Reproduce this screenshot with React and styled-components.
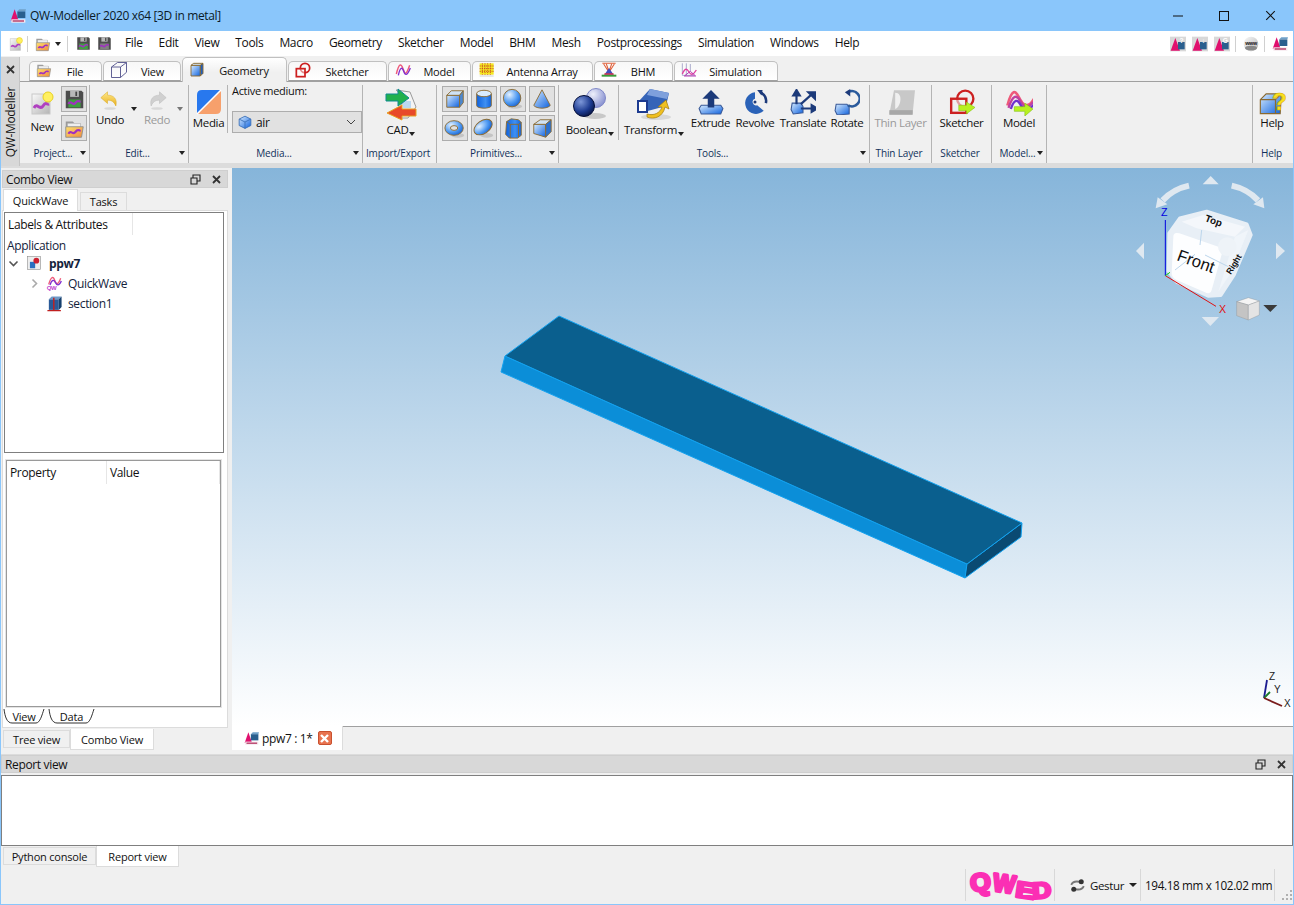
import React from "react";
import styled, { createGlobalStyle } from "styled-components";

const GlobalStyle = createGlobalStyle`
  html, body {
    margin: 0;
    padding: 0;
    background: #f0f0f0;
  }
  * {
    box-sizing: border-box;
  }
  body {
    font-family: "Open Sans", "Noto Sans", "Liberation Sans", sans-serif;
    font-size: 12px;
    color: #111;
  }
`;

const Window = styled("div")`
  width: 1294px;
  height: 905px;
  display: flex;
  flex-direction: column;
  border: 1px solid #8ac6fb;
  border-top: 0;
  background: #f0f0f0;
  overflow: hidden;
  letter-spacing: -0.35px;
`;

const TitleBar = styled("div")`
  height: 31px;
  margin: 0 -1px;
  flex: none;
  display: flex;
  align-items: center;
  background: #8ac6fb;
  padding: 0 1px 0 10px;
  font-size: 12px;
  color: #0a1a28;

  span {
    margin-left: 4px;
    flex: 1;
  }
`;

const WinButton = styled("div")`
  width: 46px;
  height: 31px;
  display: flex;
  align-items: center;
  justify-content: center;
`;

const MenuBar = styled("div")`
  height: 25px;
  flex: none;
  display: flex;
  align-items: center;
  background: #fff;
  padding-left: 8px;
`;

const MenuItem = styled("div")`
  padding: 0 8px 2px;
  white-space: nowrap;
`;

const BarSep = styled("div")`
  width: 1px;
  height: 16px;
  background: #d0d0d0;
  margin: ${(p) => p.$m || "0 7px"};
`;

const BarGap = styled("div")`
  width: ${(p) => p.$w}px;
  flex: none;
`;

const MenuSpacer = styled("div")`
  flex: 1;
`;

const RibbonArea = styled("div")`
  height: 112px;
  flex: none;
  display: flex;
  background: #f0f0f0;
  border-bottom: 5px solid #dcdcdc;
`;

const SideStrip = styled("div")`
  width: 19px;
  margin-top: 1px;
  margin-bottom: -3px;
  flex: none;
  background: #d8d8d8;
  border-right: 1px solid #c4c4c4;
  display: flex;
  flex-direction: column;
  align-items: center;
  padding-top: 8px;
  gap: 13px;
`;

const SideText = styled("div")`
  writing-mode: vertical-rl;
  transform: rotate(180deg);
  white-space: nowrap;
  font-size: 12px;
`;

const RibbonMain = styled("div")`
  flex: 1;
  display: flex;
  flex-direction: column;
  min-width: 0;
`;

const TabRow = styled("div")`
  height: 26px;
  flex: none;
  display: flex;
  align-items: flex-end;
  padding-left: 9px;
  border-bottom: 1px solid #a0a0a0;
`;

const RibbonTab = styled("div")`
  width: ${(p) => p.$w}px;
  height: ${(p) => (p.$active ? 25 : 20)}px;
  margin-right: 1px;
  margin-bottom: ${(p) => (p.$active ? -1 : 0)}px;
  display: flex;
  align-items: center;
  padding: 0 0 0 6px;
  background: ${(p) =>
    p.$active
      ? "linear-gradient(#fff, #f0f0f0 60%)"
      : "linear-gradient(#f7f7f7, #fff)"};
  border: 1px solid #c0c0c0;
  border-bottom: ${(p) => (p.$active ? "0" : "1px solid #a0a0a0")};
  border-radius: 5px 5px 0 0;
  font-size: 11px;
  letter-spacing: -0.2px;

  svg {
    flex: none;
    margin-top: ${(p) => (p.$active ? 0 : -2)}px;
  }

  span {
    flex: 1;
    text-align: center;
    white-space: nowrap;
    padding-top: ${(p) => (p.$active ? 0 : 1)}px;
    padding-right: 3px;
  }
`;

const Ribbon = styled("div")`
  flex: 1;
  display: flex;
  min-height: 0;
`;

const Group = styled("div")`
  width: ${(p) => p.$w}px;
  flex: none;
  display: flex;
  flex-direction: column;
  margin-top: 3px;
  border-right: ${(p) => (p.$noSep ? "0" : "1px solid #b4b4b4")};
  border-left: ${(p) => (p.$left ? "1px solid #b4b4b4" : "0")};
`;

const GroupBody = styled("div")`
  height: 60px;
  flex: none;
  display: flex;
  align-items: flex-start;
  padding: ${(p) => p.$pad || "0"};
`;

const GroupLabel = styled("div")`
  display: grid;
  grid-template-columns: 1fr auto 1fr;
  align-items: center;
  height: 15px;
  font-size: 10px;
  letter-spacing: -0.15px;
  color: #10305a;
  white-space: nowrap;
  padding-right: 3px;

  span {
    grid-column: 2;
  }

  i {
    grid-column: 3;
    justify-self: end;
  }
`;

const Caret = styled("i")`
  display: block;
  width: 0;
  height: 0;
  border-left: ${(p) => p.$s || 3.5}px solid transparent;
  border-right: ${(p) => p.$s || 3.5}px solid transparent;
  border-top: ${(p) => (p.$s ? p.$s : 4)}px solid ${(p) => p.$c || "#222"};
`;

const CaretBox = styled("div")`
  width: ${(p) => p.$w || 8}px;
  flex: none;
  display: flex;
  justify-content: center;
  padding-top: ${(p) => p.$top || 0}px;
`;

const BigButton = styled("div")`
  width: ${(p) => p.$w}px;
  flex: none;
  display: flex;
  flex-direction: column;
  align-items: center;
  gap: ${(p) => p.$gap || 0}px;
  padding-top: ${(p) => p.$top || 0}px;
  font-size: 11.5px;
  line-height: 14px;
  white-space: nowrap;
  color: ${(p) => (p.$off ? "#9a9a9a" : "#111")};

  svg {
    flex: none;
  }
`;

const LabelCaret = styled("div")`
  display: flex;
  align-items: flex-end;
  gap: 1px;
  height: 14px;

  i {
    margin-bottom: 1px;
  }
`;

const Stack = styled("div")`
  display: flex;
  flex-direction: column;
  gap: 3px;
`;

const SquareBtn = styled("div")`
  width: 26px;
  height: 26px;
  background: #e1e1e1;
  border: 1px solid #adadad;
  display: flex;
  align-items: center;
  justify-content: center;
`;

const PrimGrid = styled("div")`
  display: grid;
  grid-template-columns: repeat(4, 26px);
  grid-auto-rows: 26px;
  gap: 3px;
`;

const VSep = styled("div")`
  width: 1px;
  height: ${(p) => p.$h}px;
  flex: none;
  margin-left: ${(p) => p.$ml || 0}px;
  background: #b4b4b4;
`;

const MediumColumn = styled("div")`
  display: flex;
  flex-direction: column;
  margin-left: 4px;
`;

const MediumLabel = styled("div")`
  height: 14px;
  line-height: 14px;
  margin-top: -1px;
  margin-bottom: 13px;
  font-size: 11px;
  letter-spacing: -0.3px;
`;

const Combo = styled("div")`
  width: 130px;
  height: 22px;
  display: flex;
  align-items: center;
  gap: 4px;
  padding: 0 5px;
  background: #e1e1e1;
  border: 1px solid #adadad;

  span {
    flex: 1;
  }
`;

const Spacer = styled("div")`
  flex: 1;
`;

const Main = styled("div")`
  flex: none;
  height: 582px;
  display: flex;
`;

const LeftPanel = styled("div")`
  width: 231px;
  flex: none;
  display: flex;
  flex-direction: column;
  padding: 2px 4px 0 1px;
`;

const DockTitle = styled("div")`
  height: 18px;
  flex: none;
  display: flex;
  align-items: center;
  justify-content: space-between;
  background: #d8d8d8;
  border: 1px solid #cfcfcf;
  padding: 0 6px 0 3px;

  div {
    display: flex;
    align-items: center;
    gap: 11px;
  }
`;

const TopTabs = styled("div")`
  height: 21px;
  flex: none;
  margin-top: 1px;
  display: flex;
  align-items: flex-end;
  padding-left: 1px;
`;

const TopTab = styled("div")`
  width: ${(p) => p.$w}px;
  height: ${(p) => (p.$active ? 22 : 18)}px;
  margin-bottom: ${(p) => (p.$active ? -1 : 0)}px;
  margin-right: ${(p) => (p.$active ? 2 : 0)}px;
  display: flex;
  align-items: center;
  justify-content: center;
  font-size: 11px;
  letter-spacing: -0.2px;
  background: ${(p) => (p.$active ? "#fff" : "#f0f0f0")};
  border: 1px solid #dcdcdc;
  border-bottom: 0;
  position: relative;
`;

const ComboPage = styled("div")`
  flex: 1;
  min-height: 0;
  display: flex;
  flex-direction: column;
  background: #fff;
  border: 1px solid #dcdcdc;
  padding: 1px 1px 0 1px;
`;

const TreeBox = styled("div")`
  height: 241px;
  flex: none;
  margin-right: 2px;
  border: 1px solid #7f7f7f;
  background: #fff;
`;

const TreeHeader = styled("div")`
  height: 22px;
  width: 128px;
  padding-left: 3px;
  display: flex;
  align-items: center;
  border-right: 1px solid #e6e6e6;
`;

const TreeRow = styled("div")`
  height: 20px;
  display: flex;
  align-items: center;
  padding-left: ${(p) => p.$indent || 2}px;
  margin-bottom: ${(p) => p.$mb || 0}px;
  font-weight: ${(p) => (p.$bold ? 700 : 400)};
  gap: ${(p) => p.$gap || 4}px;
  color: #14233c;
`;

const PropBox = styled("div")`
  height: 247px;
  flex: none;
  margin: 7px 5px 0 2px;
  border: 1px solid #9a9a9a;
  box-shadow: 0 0 0 1px #e4e4e4;
  background: #fff;
`;

const PropHeader = styled("div")`
  height: 23px;
  display: flex;
  align-items: center;

  div {
    height: 100%;
    display: flex;
    align-items: center;
    padding-left: 3px;
    border-right: 1px solid #e6e6e6;
  }

  div:first-child {
    width: 100px;
  }

  div:last-child {
    flex: 1;
  }
`;

const SheetTabs = styled("div")`
  display: flex;
  height: 18px;
  padding-top: 2px;
  margin-left: -1px;
  gap: 3px;
`;

const SheetTab = styled("div")`
  width: ${(p) => p.$w}px;
  height: 15px;
  position: relative;
  text-align: center;
  font-size: 11px;
  letter-spacing: -0.2px;
  line-height: 15px;

  svg {
    position: absolute;
    left: 0;
    top: 0;
  }
`;

const BottomTabs = styled("div")`
  height: 21px;
  flex: none;
  margin-top: ${(p) => (p.$flush ? 0 : 1)}px;
  display: flex;
  align-items: flex-start;
  padding-left: ${(p) => p.$pad || 1}px;
`;

const BottomTab = styled("div")`
  width: ${(p) => p.$w}px;
  height: ${(p) => (p.$active ? 21 : 18)}px;
  margin-top: ${(p) => (p.$active ? 0 : 1)}px;
  display: flex;
  align-items: center;
  justify-content: center;
  font-size: 11px;
  letter-spacing: -0.2px;
  background: ${(p) => (p.$active ? "#fff" : "#f0f0f0")};
  border: 1px solid #dcdcdc;
  border-top: ${(p) => (p.$active ? "0" : "1px solid #dcdcdc")};
`;

const RightPanel = styled("div")`
  flex: 1;
  min-width: 0;
  display: flex;
  flex-direction: column;
`;

const Viewport = styled("div")`
  height: 558px;
  flex: none;
  position: relative;
  background: linear-gradient(#86b5da, #ffffff);

  > svg:first-child {
    display: block;
  }
`;

const NavCubeBox = styled("div")`
  position: absolute;
  top: -3px;
  right: -1px;
  width: 174px;
  height: 170px;

  svg {
    display: block;
  }
`;

const MiniAxes = styled("div")`
  position: absolute;
  right: 0;
  bottom: 14px;
  width: 39px;
  height: 42px;

  svg {
    display: block;
  }
`;

const DocTabs = styled("div")`
  flex: 1;
  display: flex;
  border-top: 1px solid #a0a0a0;
  background: #f0f0f0;
`;

const DocTab = styled("div")`
  width: 111px;
  height: 24px;
  margin-top: -1px;
  display: flex;
  align-items: center;
  gap: 3px;
  padding-left: 12px;
  background: #fff;
  border-right: 1px solid #dcdcdc;
`;

const CloseBox = styled("div")`
  width: 14px;
  height: 14px;
  margin-left: 2px;
  background: #e8734f;
  border: 1px solid #c9502e;
  border-radius: 2px;
  display: flex;
  align-items: center;
  justify-content: center;
`;

const ReportArea = styled("div")`
  flex: none;
  margin-top: 4px;
  border-top: 1px solid #dcdcdc;
  display: flex;
  flex-direction: column;
`;

const ReportBox = styled("div")`
  height: 71px;
  margin-top: 2px;
  background: #fff;
  border: 1px solid #7f7f7f;
`;

const StatusBar = styled("div")`
  flex: 1;
  display: flex;
  justify-content: flex-end;
  align-items: flex-end;
  padding-bottom: 3px;
`;

const StatusCell = styled("div")`
  width: ${(p) => p.$w}px;
  height: 32px;
  flex: none;
  display: flex;
  align-items: center;
  gap: ${(p) => p.$gap || 0}px;
  padding: ${(p) => p.$pad || "0 4px"};
  border-left: 1px solid #d8d8d8;
  font-size: ${(p) => p.$size || 12}px;
  white-space: nowrap;
`;

const Grip = styled("div")`
  width: 19px;
  height: 32px;
  border-left: 1px solid #d8d8d8;
  display: flex;
  align-items: flex-end;
  justify-content: flex-end;
`;

function Defs() {
  return (
    <svg width="0" height="0" style={{ display: "block" }}>
      <defs>
        <linearGradient id="gBlue" x1="0" y1="0" x2="1" y2="1">
          <stop offset="0" stopColor="#d8ecff" />
          <stop offset="1" stopColor="#0f62de" />
        </linearGradient>
        <linearGradient id="gBlueH" x1="0" y1="0" x2="1" y2="0">
          <stop offset="0" stopColor="#0f62de" />
          <stop offset="0.6" stopColor="#3f90f2" />
          <stop offset="1" stopColor="#0f62de" />
        </linearGradient>
        <radialGradient id="gSphere" cx="0.35" cy="0.3" r="0.8">
          <stop offset="0" stopColor="#e4f2ff" />
          <stop offset="0.6" stopColor="#4c98f2" />
          <stop offset="1" stopColor="#1259c8" />
        </radialGradient>
        <radialGradient id="gDark" cx="0.35" cy="0.3" r="0.8">
          <stop offset="0" stopColor="#7d97d8" />
          <stop offset="0.6" stopColor="#1c3a90" />
          <stop offset="1" stopColor="#050f38" />
        </radialGradient>
        <radialGradient id="gPale" cx="0.35" cy="0.3" r="0.8">
          <stop offset="0" stopColor="#eef0fb" />
          <stop offset="1" stopColor="#7e88cc" />
        </radialGradient>
        <linearGradient id="gYellow" x1="0" y1="0" x2="0" y2="1">
          <stop offset="0" stopColor="#ffe98a" />
          <stop offset="1" stopColor="#e8b020" />
        </linearGradient>
        <linearGradient id="gFolder" x1="0" y1="0" x2="1" y2="1">
          <stop offset="0" stopColor="#ffe070" />
          <stop offset="1" stopColor="#f08a3c" />
        </linearGradient>
        <linearGradient id="gGrey" x1="0" y1="0" x2="1" y2="1">
          <stop offset="0" stopColor="#fafafa" />
          <stop offset="1" stopColor="#b4b4b4" />
        </linearGradient>
      </defs>
    </svg>
  );
}

const Ico = ({ w, h = w, vb = "0 0 24 24", children }) => (
  <svg width={w} height={h} viewBox={vb}>
    {children}
  </svg>
);

const AppLogo = ({ s = 16 }) => (
  <Ico w={s}>
    <polygon points="7,2 13,19 1,19" fill="#e0106e" />
    <rect x="11" y="5" width="12" height="10" fill="#2a5f8e" />
    <polygon points="11,5 14,2 24,2 23,5" fill="#6fa0c8" />
    <rect x="2" y="17" width="21" height="5" fill="#f6e8ee" />
    <rect x="4" y="18.5" width="17" height="2" fill="#b0305e" />
  </Ico>
);

const NewIcon = ({ s = 24 }) => (
  <Ico w={s}>
    <rect x="2" y="3" width="18" height="20" fill="url(#gGrey)" stroke="#c8c8c8" />
    <path d="M4 17 C7 11 10 20 13 15 S17 14 19 13" fill="none" stroke="#b040c0" strokeWidth="3" />
    <circle cx="18" cy="6" r="5" fill="#fff060" stroke="#e8d020" />
  </Ico>
);

const SaveIcon = ({ s = 22, accent = "#3fa040" }) => (
  <Ico w={s}>
    <path d="M2 2 H20 L22 4 V22 H2 Z" fill="#4c4c4c" />
    <rect x="7" y="2" width="10" height="7" fill="#b8b8b8" />
    <rect x="13" y="3" width="2" height="5" fill="#444" />
    <rect x="5" y="12" width="14" height="9" fill={accent} />
    <path d="M5 17 C8 12 10 20 13 16 S17 15 19 14" fill="none" stroke="#a030c0" strokeWidth="2.5" />
  </Ico>
);

const OpenIcon = ({ s = 22 }) => (
  <Ico w={s}>
    <path d="M2 4 H10 L12 6 H19 V10 H2 Z" fill="#9a9a9a" />
    <rect x="4" y="6" width="15" height="7" fill="#eee" stroke="#aaa" strokeWidth=".5" />
    <path d="M2 10 H22 L20 22 H2 Z" fill="url(#gFolder)" stroke="#8c8c8c" />
    <path d="M5 18 C8 13 10 20 13 16 S17 15 19 14" fill="none" stroke="#a030c0" strokeWidth="2.5" />
  </Ico>
);

const ArrowCurve = ({ fill, mirror, stroke }) => (
  <g transform={mirror ? "translate(24 0) scale(-1 1)" : undefined}>
    <path
      d="M1 8 L9 1 V5 C17 5 21 10 19 18 C17 13 14 11 9 11 V15 Z"
      fill={fill}
      stroke={stroke}
      strokeWidth=".6"
    />
    <ellipse cx="12" cy="21" rx="7" ry="1.6" fill="#d8d8d8" />
  </g>
);

const MediaIcon = () => (
  <Ico w={26} vb="0 0 26 26">
    <path d="M1 25 L25 1 V20 Q25 25 20 25 Z" fill="#f7a06c" />
    <path d="M1 25 L25 1 H6 Q1 1 1 6 Z" fill="#2878ee" />
    <path d="M1 25 L25 1" stroke="#fff" strokeWidth="1.6" />
  </Ico>
);

const TinyCube = () => (
  <Ico w={14}>
    <polygon points="12,2 22,7 22,18 12,23 2,18 2,7" fill="url(#gBlue)" stroke="#3a70b8" strokeWidth="1.5" />
    <path d="M2 7 L12 12 L22 7 M12 12 V23" fill="none" stroke="#3a70b8" strokeWidth="1.5" />
  </Ico>
);

const CadIcon = () => (
  <Ico w={34} vb="0 0 34 34">
    <path d="M12 3 L26 5 L32 20 L24 31 H14 L20 10 Z" fill="#f4f4f4" stroke="#9a9a9a" />
    <rect x="19" y="14" width="8" height="7" fill="#bcd8f0" />
    <polygon points="2,7 14,7 14,2 25,11 14,19 14,14 2,14" fill="#22b04c" stroke="#0f8a90" />
    <polygon points="32,22 18,22 18,18 3,26 18,33 18,29 32,29" fill="#e8492a" stroke="#e8a020" />
  </Ico>
);

const brown = "#8a6a32";

const PrimBox = () => (
  <Ico w={22}>
    <polygon points="3,8 17,8 17,21 3,21" fill="url(#gBlue)" stroke={brown} />
    <polygon points="3,8 8,3 21,3 17,8" fill="#cfe2f4" stroke={brown} />
    <polygon points="17,8 21,3 21,16 17,21" fill="#4c88d0" stroke={brown} />
  </Ico>
);
const PrimCylinder = () => (
  <Ico w={22}>
    <path d="M4 6 V19 C4 23 20 23 20 19 V6" fill="url(#gBlueH)" stroke={brown} />
    <ellipse cx="12" cy="6" rx="8" ry="3.5" fill="#d8ecff" stroke={brown} />
  </Ico>
);
const PrimSphere = () => (
  <Ico w={22}>
    <ellipse cx="14" cy="20" rx="8" ry="2.5" fill="#c4c4c4" />
    <circle cx="11" cy="11" r="9.5" fill="url(#gSphere)" stroke={brown} />
  </Ico>
);
const PrimCone = () => (
  <Ico w={22}>
    <path d="M12 2 L21 19 C18 23 6 23 3 19 Z" fill="url(#gBlue)" stroke={brown} />
  </Ico>
);
const PrimTorus = () => (
  <Ico w={22}>
    <ellipse cx="15" cy="20" rx="7" ry="2.5" fill="#c4c4c4" />
    <ellipse cx="11" cy="12" rx="10" ry="8" fill="url(#gSphere)" stroke={brown} />
    <ellipse cx="11" cy="12" rx="4" ry="2.6" fill="#e1e1e1" stroke={brown} />
  </Ico>
);
const PrimEllipsoid = () => (
  <Ico w={22}>
    <ellipse cx="15" cy="20" rx="7" ry="2.5" fill="#c4c4c4" />
    <ellipse cx="11" cy="11" rx="11" ry="7" transform="rotate(-35 11 11)" fill="url(#gSphere)" stroke={brown} />
  </Ico>
);
const PrimPrism = () => (
  <Ico w={22}>
    <polygon points="5,5 10,2 18,3 21,6 21,20 17,23 8,23 4,19" fill="url(#gBlueH)" stroke={brown} />
    <path d="M5 5 L9 8 H18 L21 6 M9 8 V23 M18 8 V22" fill="none" stroke={brown} />
  </Ico>
);
const PrimWedge = () => (
  <Ico w={22}>
    <polygon points="3,8 16,8 16,22 3,18" fill="url(#gBlue)" stroke={brown} />
    <polygon points="3,8 10,3 22,3 16,8" fill="#cfe2f4" stroke={brown} />
    <polygon points="16,8 22,3 22,16 16,22" fill="#2a70d0" stroke={brown} />
  </Ico>
);

const BooleanIcon = () => (
  <Ico w={34} vb="0 0 34 34">
    <ellipse cx="22" cy="29" rx="11" ry="3" fill="#c8c8c8" />
    <circle cx="23" cy="11" r="9.5" fill="url(#gPale)" stroke="#8088c8" />
    <circle cx="11" cy="19" r="10.5" fill="url(#gDark)" stroke="#050f38" />
  </Ico>
);

const TransformIcon = () => (
  <Ico w={36} vb="0 0 36 36">
    <ellipse cx="20" cy="31" rx="15" ry="3" fill="#d8d8d8" />
    <polygon points="3,15 14,3 33,7 30,20 8,26" fill="#3564b8" />
    <polygon points="14,3 33,7 31,13 11,9" fill="#7ea0dc" />
    <rect x="2" y="15" width="9" height="11" fill="#fff" stroke="#1c3a90" strokeWidth="2" />
    <path d="M11 28 C18 30 24 27 26 21 L22 21 L30 14 L33 23 L29 21 C27 31 18 34 11 31 Z" fill="#f0c020" stroke="#a07a10" strokeWidth=".7" />
  </Ico>
);

const ExtrudeIcon = () => (
  <Ico w={26}>
    <polygon points="3,15 21,15 23,18 21,23 3,23 1,18" fill="url(#gBlue)" stroke="#3a5a98" />
    <polygon points="12,1 20,9 15,9 15,17 9,17 9,9 4,9" fill="#1c3a7a" />
  </Ico>
);

const RevolveIcon = () => (
  <Ico w={26}>
    <path d="M12 3 A10 10 0 1 0 20 20 L14 15 A3 3 0 1 1 12 9 Z" fill="#2a62b8" />
    <circle cx="12" cy="12" r="1.4" fill="#1c3a7a" />
    <path d="M17 3 C21 5 23 9 22 13" fill="none" stroke="#1c3a7a" strokeWidth="2.4" />
    <polygon points="14,1 19,1 18,6" fill="#1c3a7a" />
  </Ico>
);

const TranslateIcon = () => (
  <Ico w={26}>
    <polygon points="2,13 10,13 12,16 12,22 3,23 1,19" fill="url(#gBlue)" stroke="#3a5a98" />
    <path d="M6 14 V5 M3 6 L6 1 L9 6 Z M10 14 L20 5 M17 3 H23 V9 Z M10 18 H21 M20 15 L25 18 L20 21 Z" fill="#1c3a7a" stroke="#1c3a7a" strokeWidth="2" />
  </Ico>
);

const RotateIcon = () => (
  <Ico w={26}>
    <polygon points="2,14 12,14 14,17 14,23 3,24 1,20" fill="url(#gBlue)" stroke="#3a5a98" />
    <path d="M13 3 A7 7 0 1 1 13 15" fill="none" stroke="#2a5a9c" strokeWidth="2.4" />
    <polygon points="15,0 15,7 10,3" fill="#1c3a7a" />
  </Ico>
);

const ThinLayerIcon = () => (
  <Ico w={28}>
    <polygon points="6,2 24,2 22,22 2,22" fill="#c8c8c8" />
    <path d="M7 4 C14 4 12 16 7 18 Z" fill="#f0f0f0" />
    <rect x="2" y="19" width="20" height="4" fill="#a8a8a8" />
  </Ico>
);

const SketcherIcon = () => (
  <Ico w={26}>
    <circle cx="15" cy="9" r="7.5" fill="none" stroke="#cc2020" strokeWidth="2.2" />
    <rect x="2" y="9" width="14" height="13" fill="#f0f0f0" fillOpacity=".6" stroke="#cc2020" strokeWidth="2.2" />
    <polygon points="9,15 16,15 16,12 24,17 16,23 16,20 9,20" fill="#b8f020" stroke="#80c010" strokeWidth=".5" />
  </Ico>
);

const ModelIcon = () => (
  <Ico w={28}>
    <path d="M2 15 C6 0 9 2 12 8 S19 19 25 9" fill="none" stroke="#ee5a7a" strokeWidth="2.2" />
    <path d="M3 17 C7 5 10 6 13 11 S19 19 24 12" fill="none" stroke="#c040a0" strokeWidth="2" />
    <path d="M5 18 C8 9 11 10 13 14 S19 21 25 14" fill="none" stroke="#7030d0" strokeWidth="2" />
    <polygon points="8,16 17,16 17,13 24,18 17,24 17,20 8,20" fill="#b8f020" stroke="#80c010" strokeWidth=".5" />
  </Ico>
);

const HelpIcon = () => (
  <Ico w={28}>
    <polygon points="2,10 7,5 20,5 19,22 2,22" fill="url(#gBlue)" stroke={brown} />
    <path d="M2 10 H15 V22 M15 10 L20 5" fill="none" stroke={brown} />
    <text x="12" y="19" fontSize="21" fontWeight="700" fontFamily="Liberation Sans, sans-serif" fill="#f8e020" stroke="#d8b000" strokeWidth=".5">?</text>
  </Ico>
);

const WireCube = () => (
  <Ico w={18}>
    <path d="M2 8 L10 2 H22 V15 L14 22 H2 Z M2 8 H14 V22 M14 8 L22 2" fill="none" stroke="#50508a" strokeWidth="1.2" />
  </Ico>
);

const TabGeoIcon = () => (
  <Ico w={16}>
    <polygon points="3,5 17,5 17,21 3,21" fill="url(#gBlue)" stroke={brown} strokeWidth="1.4" />
    <polygon points="3,5 7,2 21,2 17,5" fill="#cfe2f4" stroke={brown} strokeWidth="1.4" />
    <polygon points="17,5 21,2 21,17 17,21" fill="#1f5fc0" stroke={brown} strokeWidth="1.4" />
  </Ico>
);

const TabSketchIcon = () => (
  <Ico w={16}>
    <circle cx="15" cy="9" r="7" fill="none" stroke="#cc2020" strokeWidth="2.6" />
    <rect x="2" y="10" width="13" height="12" fill="#fff" fillOpacity=".5" stroke="#cc2020" strokeWidth="2.6" />
  </Ico>
);

const TabModelIcon = () => (
  <Ico w={16}>
    <path d="M2 18 C6 1 9 2 12 10 S16 22 22 5" fill="none" stroke="#ee5a7a" strokeWidth="2.2" />
    <path d="M5 20 C8 6 11 8 13 14 S18 22 23 9" fill="none" stroke="#8030d0" strokeWidth="2" />
  </Ico>
);

const TabAntennaIcon = () => (
  <Ico w={16}>
    <rect x="1" y="2" width="21" height="17" fill="#f4e820" />
    <path d="M1 6 H22 M1 10 H22 M1 14 H22 M5 2 V19 M9 2 V19 M13 2 V19 M17 2 V19" stroke="#c03020" strokeWidth="1.3" strokeDasharray="1.6 1.6" />
    <rect x="1" y="20" width="21" height="2" fill="#dcdcdc" />
  </Ico>
);

const TabBhmIcon = () => (
  <Ico w={16}>
    <path d="M2 2 H22 M4 3 L11 14 M20 3 L13 14 M8 3 L12 14 M16 3 L12 14" stroke="#e0603a" strokeWidth="1.6" />
    <polygon points="12,9 19,19 5,19" fill="#4050c0" />
    <rect x="1" y="19" width="22" height="3" fill="#3a9a3a" />
    <rect x="5" y="17" width="14" height="2" fill="#e03040" />
  </Ico>
);

const TabSimIcon = () => (
  <Ico w={16}>
    <path d="M2 2 V20 H20 M8 2 V20 M14 3 V14" fill="none" stroke="#9898c0" strokeWidth="1.2" />
    <path d="M2 18 C6 8 9 10 12 15 S18 20 23 12" fill="none" stroke="#e040a0" strokeWidth="2" />
    <path d="M5 21 L14 14 L22 21 Z" fill="none" stroke="#b030b0" strokeWidth="1.4" />
  </Ico>
);

const ToolHelp = ({ mark }) => (
  <Ico w={16}>
    <rect x="0" y="1" width="24" height="22" fill="#d8d8d8" />
    <polygon points="8,3 15,22 1,22" fill="#e0106e" />
    <rect x="12" y="9" width="10" height="11" fill="#2a5f8e" />
    <text x="17" y="10" fontSize="10" fontWeight="700" textAnchor="middle" fill="#fff" fontFamily="Liberation Sans, sans-serif">{mark}</text>
  </Ico>
);

const WwwIcon = () => (
  <Ico w={16}>
    <circle cx="12" cy="12" r="11" fill="url(#gGrey)" />
    <ellipse cx="12" cy="18" rx="9" ry="3.5" fill="#888" />
    <text x="12" y="13" fontSize="8" fontWeight="700" textAnchor="middle" fill="#111" fontFamily="Liberation Sans, sans-serif" letterSpacing="-.5">www</text>
  </Ico>
);

const Chevron = ({ open }) => (
  <Ico w={11} vb="0 0 11 11">
    <path
      d={open ? "M1.5 3.5 L5.5 7.5 L9.5 3.5" : "M3.5 1.5 L7.5 5.5 L3.5 9.5"}
      fill="none"
      stroke={open ? "#555" : "#aaa"}
      strokeWidth="1.6"
    />
  </Ico>
);

const DocIcon = () => (
  <Ico w={14}>
    <rect x="1" y="1" width="22" height="22" fill="#eee" stroke="#8a8a8a" />
    <polygon points="5,10 14,10 14,21 5,21" fill="#2a6fc0" />
    <circle cx="16" cy="8" r="5" fill="#cc2030" />
  </Ico>
);

const QwTreeIcon = () => (
  <Ico w={16}>
    <path d="M4 14 C8 1 11 2 13 8 S18 16 22 5" fill="none" stroke="#ee5a7a" strokeWidth="2" />
    <path d="M6 15 C9 6 12 7 14 11 S19 18 23 9" fill="none" stroke="#8030d0" strokeWidth="2" />
    <text x="1" y="23" fontSize="9" fontWeight="700" fill="#c040d0" fontFamily="Liberation Sans, sans-serif">QW</text>
  </Ico>
);

const SectionIcon = () => (
  <Ico w={17}>
    <polygon points="4,6 18,6 18,21 4,21" fill="#2a5a98" />
    <polygon points="4,6 8,2 22,2 18,6" fill="#6e9ac8" />
    <polygon points="18,6 22,2 22,17 18,21" fill="#16406e" />
    <path d="M11 4 V22 M2 22 H21" stroke="#c02020" strokeWidth="2" />
  </Ico>
);

const RestoreGlyph = () => (
  <Ico w={11} vb="0 0 11 11">
    <path d="M1 4 H7 V10 H1 Z M3 4 V1 H10 V7 H7" fill="none" stroke="#222" strokeWidth="1.1" />
  </Ico>
);

const CloseGlyph = ({ c = "#333", s = 9, sw = 1.8 }) => (
  <Ico w={s} vb="0 0 9 9">
    <path d="M1 1 L8 8 M8 1 L1 8" stroke={c} strokeWidth={sw} />
  </Ico>
);

const SheetShape = ({ w }) => (
  <svg width={w} height="15" viewBox={`0 0 ${w} 15`}>
    <path
      d={`M1 0 C2 8 4 14 9 14 H${w - 9} C${w - 5} 14 ${w - 3} 6 ${w - 1} 0`}
      fill="none"
      stroke="#333"
    />
  </svg>
);

const Scene = () => (
  <svg width="1061" height="558" viewBox="232 168 1061 558">
    <polygon points="505,356 967,564 965,578 501,372" fill="#0b8ed8" stroke="#12a2f0" />
    <polygon points="967,564 1022,523 1021,537 965,578" fill="#0a4a72" stroke="#12a2f0" />
    <polygon points="559,316 1022,523 967,564 505,356" fill="#0a5f8e" stroke="#12a2f0" />
  </svg>
);

const NavCube = () => (
  <svg width="174" height="170" viewBox="0 0 522 510">
    <g fill="#dfe8f0">
      <polygon points="272,33 248,58 296,58" />
      <polygon points="245,456 297,456 271,483" />
      <polygon points="72,233 48,258 72,283" />
      <polygon points="468,233 495,258 468,283" />
      <path d="M207 62 Q160 72 128 106" fill="none" stroke="#dfe8f0" strokeWidth="18" />
      <polygon points="107,130 113,97 142,118" />
      <path d="M335 62 Q382 72 414 106" fill="none" stroke="#dfe8f0" strokeWidth="18" />
      <polygon points="433,130 429,97 400,118" />
    </g>
    <path
      d="M180 160 L260 140 L380 178 L392 210 L342 328 L302 390 L265 392 L170 350 L146 318 L148 205 Z"
      fill="#e8eff6"
      stroke="#e8eff6"
      strokeWidth="12"
      strokeLinejoin="round"
    />
    <path d="M185 170 L250 150 L375 185 L345 215 L230 190 Z" fill="#f4f7fb" />
    <path d="M345 215 L385 195 L335 320 L295 380 Z" fill="#f0f5fa" />
    <path d="M160 215 Q160 200 178 205 L295 245 Q310 250 306 265 L275 375 Q270 390 255 382 L170 345 Q155 338 155 325 Z" fill="#fdfeff" />
    <path d="M245 195 L240 240 M255 270 L325 305 M225 268 L165 315" stroke="#bcd6ec" strokeWidth="3" fill="none" />
    <circle cx="322" cy="245" r="28" fill="#eef3f8" />
    <text transform="translate(168 285) rotate(20)" fontSize="50" fontFamily="Liberation Sans, sans-serif" fill="#111">Front</text>
    <text transform="translate(253 168) rotate(20)" fontSize="30" fontFamily="Liberation Sans, sans-serif" fontWeight="700" fill="#111">Top</text>
    <text transform="translate(332 330) rotate(-58)" fontSize="26" fontFamily="Liberation Sans, sans-serif" fontWeight="700" fill="#111">Right</text>
    <path d="M136 332 V165" stroke="#0000e0" strokeWidth="3" />
    <path d="M136 332 L288 424" stroke="#e01010" strokeWidth="3" />
    <path d="M136 332 L150 322" stroke="#10d010" strokeWidth="3" />
    <text x="123" y="152" fontSize="32" fontFamily="Liberation Sans, sans-serif" fill="#0000e0">Z</text>
    <text x="297" y="444" fontSize="32" fontFamily="Liberation Sans, sans-serif" fill="#e01010">X</text>
    <polygon points="350,410 385,398 418,408 385,420" fill="#f4f4f4" stroke="#8a8a8a" />
    <polygon points="350,410 385,420 385,465 350,452" fill="#c4c4c4" stroke="#8a8a8a" />
    <polygon points="385,420 418,408 418,450 385,465" fill="#e4e4e4" stroke="#8a8a8a" />
    <polygon points="430,420 472,420 451,441" fill="#3a3a3a" />
  </svg>
);

const AxesSmall = () => (
  <svg width="39" height="42" viewBox="1255 670 39 42">
    <path d="M1265 698 L1268 680" stroke="#1c1c90" strokeWidth="1.8" />
    <path d="M1265 698 L1271 692" stroke="#1c7a2c" strokeWidth="1.8" />
    <path d="M1265 698 L1283 706" stroke="#7a1c1c" strokeWidth="1.8" />
    <g fontSize="10" fontFamily="Liberation Sans, sans-serif" fill="#222">
      <text x="1270" y="680">Z</text>
      <text x="1275" y="693">Y</text>
      <text x="1285" y="707">X</text>
    </g>
  </svg>
);

const qwedLetters = [
  { ch: "Q", x: 12, y: 24, r: -5, sx: 1.05, sy: 1 },
  { ch: "W", x: 34, y: 25, r: 8, sx: 0.95, sy: 1 },
  { ch: "E", x: 55, y: 31, r: 8, sx: 1.15, sy: 0.9 },
  { ch: "D", x: 73, y: 31, r: -4, sx: 1.05, sy: 0.9 },
];

const QwedLogo = () => (
  <svg width="84" height="36" viewBox="0 0 84 36">
    <g fontSize="25" fontWeight="700" fontFamily="Liberation Sans, sans-serif" fill="#fb2fb4" stroke="#fb2fb4" strokeWidth="3" strokeLinejoin="round" textAnchor="middle">
      {qwedLetters.map((l) => (
        <text key={l.ch} transform={`translate(${l.x} ${l.y}) rotate(${l.r}) scale(${l.sx} ${l.sy})`}>
          {l.ch}
        </text>
      ))}
    </g>
  </svg>
);

const GestureIcon = () => (
  <Ico w={15}>
    <path d="M2 11 C4 6 10 5 15 6" fill="none" stroke="#777" strokeWidth="3" />
    <path d="M22 13 C20 18 14 19 9 18" fill="none" stroke="#777" strokeWidth="3" />
    <circle cx="18" cy="6" r="4" fill="#333" />
    <circle cx="6" cy="18" r="4" fill="#333" />
  </Ico>
);

const GripDots = () => (
  <Ico w={11} h={11} vb="0 0 11 11">
    <g fill="#b0b0b0">
      <rect x="8" y="0" width="2" height="2" />
      <rect x="4" y="4" width="2" height="2" />
      <rect x="8" y="4" width="2" height="2" />
      <rect x="0" y="8" width="2" height="2" />
      <rect x="4" y="8" width="2" height="2" />
      <rect x="8" y="8" width="2" height="2" />
    </g>
  </Ico>
);

const menus = ["File", "Edit", "View", "Tools", "Macro", "Geometry", "Sketcher", "Model", "BHM", "Mesh", "Postprocessings", "Simulation", "Windows", "Help"];

const tabs = [
  { label: "File", w: 73, icon: <OpenIcon s={16} /> },
  { label: "View", w: 78, icon: <WireCube /> },
  { label: "Geometry", w: 105, icon: <TabGeoIcon />, active: true },
  { label: "Sketcher", w: 99, icon: <TabSketchIcon /> },
  { label: "Model", w: 83, icon: <TabModelIcon /> },
  { label: "Antenna Array", w: 121, icon: <TabAntennaIcon /> },
  { label: "BHM", w: 79, icon: <TabBhmIcon /> },
  { label: "Simulation", w: 104, icon: <TabSimIcon /> },
];

const primitives = [PrimBox, PrimCylinder, PrimSphere, PrimCone, PrimTorus, PrimEllipsoid, PrimPrism, PrimWedge];

function GroupTitle({ text, caret }) {
  return (
    <GroupLabel>
      <span>{text}</span>
      {caret && <Caret />}
    </GroupLabel>
  );
}

export default function App() {
  return (
    <>
      <GlobalStyle />
      <Window>
        <Defs />
        <TitleBar>
          <AppLogo s={16} />
          <span>QW-Modeller 2020 x64 [3D in metal]</span>
          <WinButton>
            <Ico w={12} vb="0 0 12 12"><path d="M1 6 H11" stroke="#111" /></Ico>
          </WinButton>
          <WinButton>
            <Ico w={12} vb="0 0 12 12"><rect x="1.5" y="1.5" width="9" height="9" fill="none" stroke="#111" /></Ico>
          </WinButton>
          <WinButton>
            <CloseGlyph c="#111" s={11} sw={0.9} />
          </WinButton>
        </TitleBar>

        <MenuBar>
          <NewIcon s={14} />
          <BarSep $m="0 7px 0 4px" />
          <OpenIcon s={16} />
          <CaretBox $w={14}><Caret /></CaretBox>
          <BarSep $m="0 8px 0 2px" />
          <SaveIcon s={15} />
          <BarGap $w={6} />
          <SaveIcon s={15} accent="#808080" />
          <BarGap $w={5} />
          {menus.map((m) => (
            <MenuItem key={m}>{m}</MenuItem>
          ))}
          <MenuSpacer />
          <ToolHelp mark="?" />
          <BarGap $w={6} />
          <ToolHelp mark="↓" />
          <BarGap $w={6} />
          <ToolHelp mark="G" />
          <BarSep $m="0 7px 0 5px" />
          <WwwIcon />
          <BarSep $m="0 7px 0 5px" />
          <AppLogo s={16} />
          <BarGap $w={5} />
        </MenuBar>

        <RibbonArea>
          <SideStrip>
            <CloseGlyph />
            <SideText>QW-Modeller</SideText>
          </SideStrip>
          <RibbonMain>
            <TabRow>
              {tabs.map((t) => (
                <RibbonTab key={t.label} $w={t.w} $active={t.active}>
                  {t.icon}
                  <span>{t.label}</span>
                </RibbonTab>
              ))}
            </TabRow>
            <Ribbon>
              <Group $w={70}>
                <GroupBody $pad="1px 0 0 3px">
                  <BigButton $w={38} $top={5} $gap={5}>
                    <NewIcon />
                    New
                  </BigButton>
                  <Stack>
                    <SquareBtn><SaveIcon s={21} /></SquareBtn>
                    <SquareBtn><OpenIcon s={21} /></SquareBtn>
                  </Stack>
                </GroupBody>
                <GroupTitle text="Project..." caret />
              </Group>

              <Group $w={99}>
                <GroupBody>
                  <BigButton $w={40} $top={6} $gap={2}>
                    <Ico w={22} h={20}><ArrowCurve fill="url(#gYellow)" stroke="#d8a820" /></Ico>
                    Undo
                  </BigButton>
                  <CaretBox $top={22}><Caret /></CaretBox>
                  <BigButton $w={38} $top={6} $gap={2} $off>
                    <Ico w={22} h={20}><ArrowCurve fill="#d0d0d0" stroke="#b8b8b8" mirror /></Ico>
                    Redo
                  </BigButton>
                  <CaretBox $top={22}><Caret $c="#777" /></CaretBox>
                </GroupBody>
                <GroupTitle text="Edit..." caret />
              </Group>

              <Group $w={174}>
                <GroupBody $pad="0 0 0 3px">
                  <BigButton $w={33} $top={4} $gap={1}>
                    <MediaIcon />
                    Media
                  </BigButton>
                  <VSep $h={48} $ml={2} />
                  <MediumColumn>
                    <MediumLabel>Active medium:</MediumLabel>
                    <Combo>
                      <TinyCube />
                      <span>air</span>
                      <Ico w={10} vb="0 0 10 10"><path d="M1 3 L5 7 L9 3" fill="none" stroke="#444" /></Ico>
                    </Combo>
                  </MediumColumn>
                </GroupBody>
                <GroupTitle text="Media..." caret />
              </Group>

              <Group $w={74}>
                <GroupBody $pad="0 0 0 3px">
                  <BigButton $w={70} $top={2} $gap={2}>
                    <CadIcon />
                    <LabelCaret>CAD<Caret /></LabelCaret>
                  </BigButton>
                </GroupBody>
                <GroupTitle text="Import/Export" />
              </Group>

              <Group $w={122}>
                <GroupBody $pad="1px 0 0 5px">
                  <PrimGrid>
                    {primitives.map((Prim, i) => (
                      <SquareBtn key={i}><Prim /></SquareBtn>
                    ))}
                  </PrimGrid>
                </GroupBody>
                <GroupTitle text="Primitives..." caret />
              </Group>

              <Group $w={311}>
                <GroupBody $pad="0 0 0 3px">
                  <BigButton $w={56} $top={2} $gap={2}>
                    <BooleanIcon />
                    <LabelCaret>Boolean<Caret /></LabelCaret>
                  </BigButton>
                  <VSep $h={55} />
                  <BigButton $w={70} $top={1} $gap={1}>
                    <TransformIcon />
                    <LabelCaret>Transform<Caret /></LabelCaret>
                  </BigButton>
                  <BigButton $w={43} $top={4} $gap={1}>
                    <ExtrudeIcon />
                    Extrude
                  </BigButton>
                  <BigButton $w={46} $top={4} $gap={1}>
                    <RevolveIcon />
                    Revolve
                  </BigButton>
                  <BigButton $w={50} $top={4} $gap={1}>
                    <TranslateIcon />
                    Translate
                  </BigButton>
                  <BigButton $w={38} $top={4} $gap={1}>
                    <RotateIcon />
                    Rotate
                  </BigButton>
                </GroupBody>
                <GroupTitle text="Tools..." caret />
              </Group>

              <Group $w={62}>
                <GroupBody>
                  <BigButton $w={61} $top={3} $off>
                    <ThinLayerIcon />
                    Thin Layer
                  </BigButton>
                </GroupBody>
                <GroupTitle text="Thin Layer" />
              </Group>

              <Group $w={60}>
                <GroupBody>
                  <BigButton $w={59} $top={4} $gap={1}>
                    <SketcherIcon />
                    Sketcher
                  </BigButton>
                </GroupBody>
                <GroupTitle text="Sketcher" />
              </Group>

              <Group $w={55}>
                <GroupBody>
                  <BigButton $w={54} $top={3}>
                    <ModelIcon />
                    Model
                  </BigButton>
                </GroupBody>
                <GroupTitle text="Model..." caret />
              </Group>

              <Spacer />

              <Group $w={41} $noSep $left>
                <GroupBody>
                  <BigButton $w={38} $top={3}>
                    <HelpIcon />
                    Help
                  </BigButton>
                </GroupBody>
                <GroupTitle text="Help" />
              </Group>
            </Ribbon>
          </RibbonMain>
        </RibbonArea>

        <Main>
          <LeftPanel>
            <DockTitle>
              Combo View
              <div>
                <RestoreGlyph />
                <CloseGlyph />
              </div>
            </DockTitle>
            <TopTabs>
              <TopTab $w={75} $active>QuickWave</TopTab>
              <TopTab $w={47}>Tasks</TopTab>
            </TopTabs>
            <ComboPage>
              <TreeBox>
                <TreeHeader>Labels &amp; Attributes</TreeHeader>
                <TreeRow $mb={-2}>Application</TreeRow>
                <TreeRow $indent={3} $bold $gap={8}>
                  <Chevron open />
                  <DocIcon />
                  ppw7
                </TreeRow>
                <TreeRow $indent={24} $gap={6}>
                  <Chevron />
                  <QwTreeIcon />
                  QuickWave
                </TreeRow>
                <TreeRow $indent={41} $gap={5}>
                  <SectionIcon />
                  section1
                </TreeRow>
              </TreeBox>
              <PropBox>
                <PropHeader>
                  <div>Property</div>
                  <div>Value</div>
                </PropHeader>
              </PropBox>
              <SheetTabs>
                <SheetTab $w={42}><SheetShape w={42} />View</SheetTab>
                <SheetTab $w={47}><SheetShape w={47} />Data</SheetTab>
              </SheetTabs>
            </ComboPage>
            <BottomTabs>
              <BottomTab $w={67}>Tree view</BottomTab>
              <BottomTab $w={84} $active>Combo View</BottomTab>
            </BottomTabs>
          </LeftPanel>

          <RightPanel>
            <Viewport>
              <Scene />
              <NavCubeBox><NavCube /></NavCubeBox>
              <MiniAxes><AxesSmall /></MiniAxes>
            </Viewport>
            <DocTabs>
              <DocTab>
                <AppLogo s={15} />
                ppw7 : 1*
                <CloseBox><CloseGlyph c="#fff" sw={2.4} /></CloseBox>
              </DocTab>
            </DocTabs>
          </RightPanel>
        </Main>

        <ReportArea>
          <DockTitle>
            Report view
            <div>
              <RestoreGlyph />
              <CloseGlyph />
            </div>
          </DockTitle>
          <ReportBox />
          <BottomTabs $pad={2} $flush>
            <BottomTab $w={93}>Python console</BottomTab>
            <BottomTab $w={83} $active>Report view</BottomTab>
          </BottomTabs>
        </ReportArea>

        <StatusBar>
          <StatusCell $w={89} $pad="0 1px 0 3px"><QwedLogo /></StatusCell>
          <StatusCell $w={86} $pad="0 0 0 15px" $gap={5} $size={11.5}>
            <GestureIcon />
            Gestur
            <Caret $s={4} />
          </StatusCell>
          <StatusCell $w={134} $pad="0 0 0 4px" $size={11.7}>194.18 mm x 102.02 mm</StatusCell>
          <Grip><GripDots /></Grip>
        </StatusBar>
      </Window>
    </>
  );
}
